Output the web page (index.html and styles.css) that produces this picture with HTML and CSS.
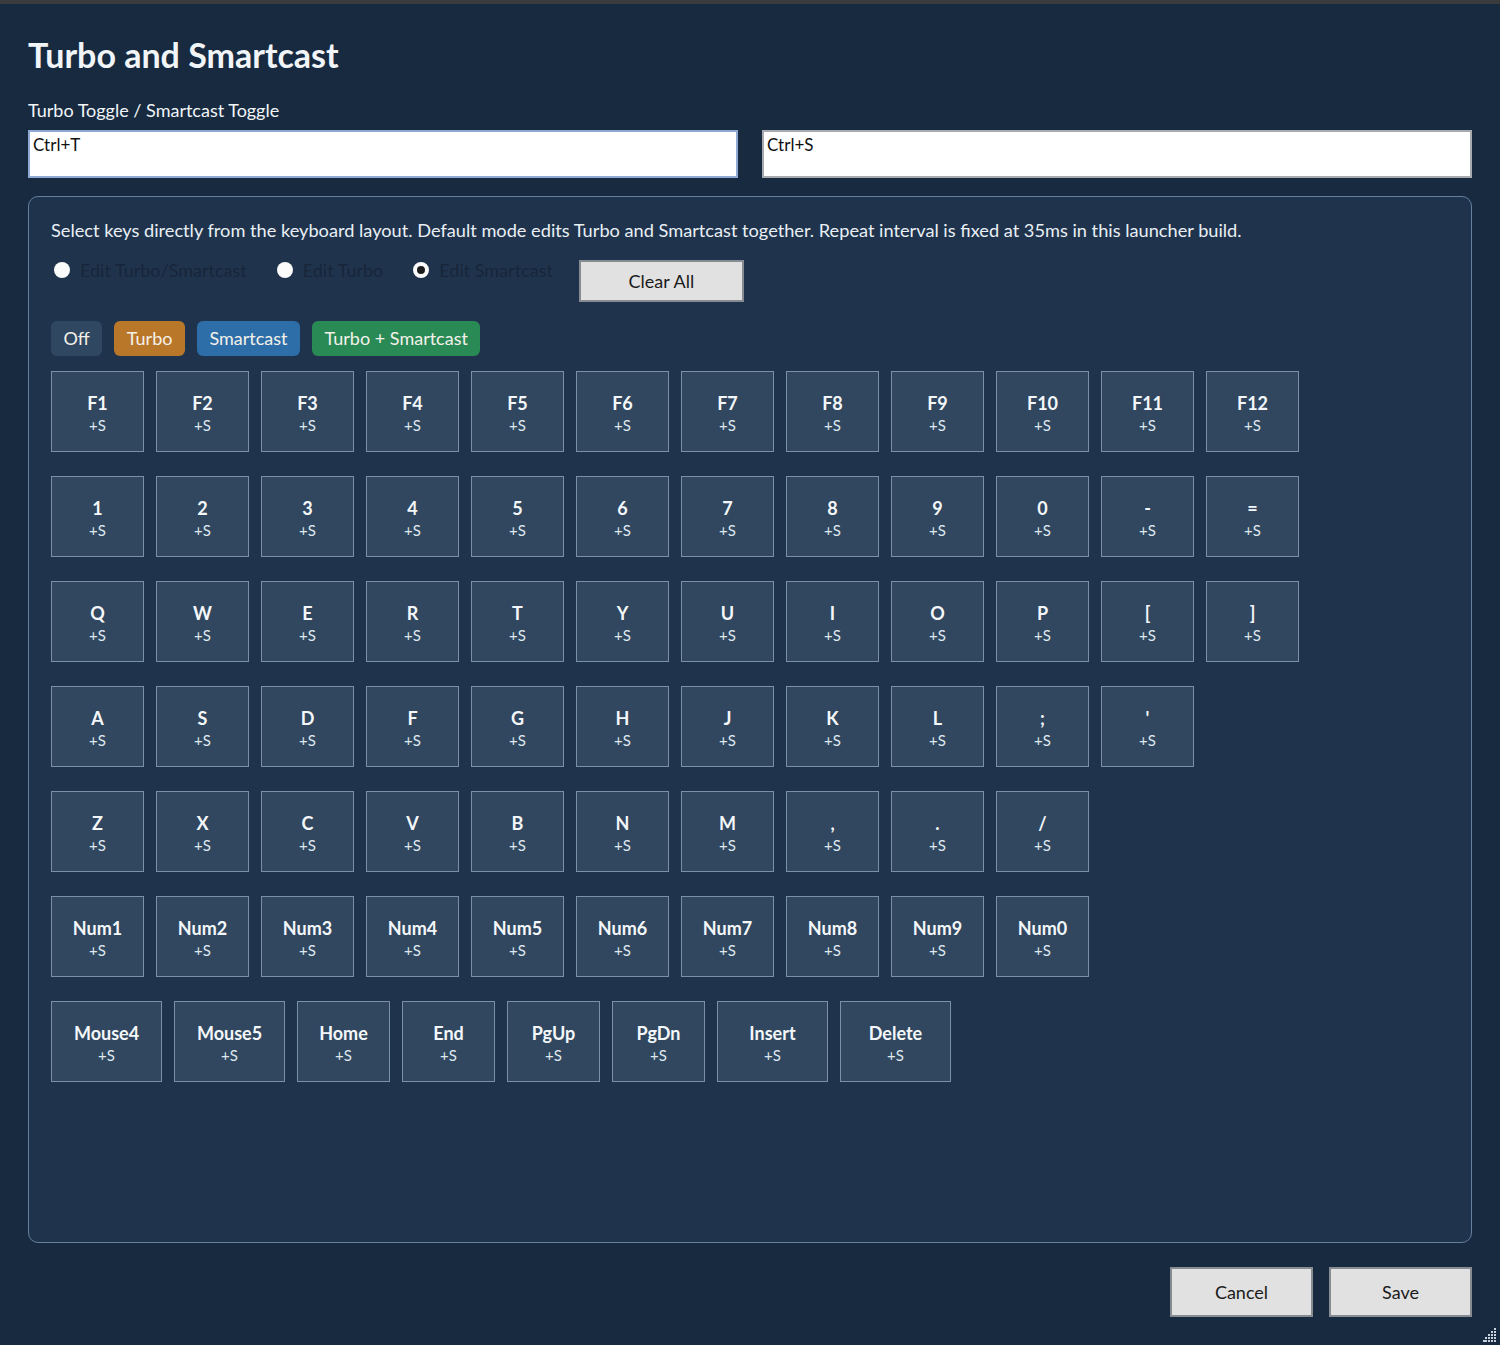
FILE: index.html
```html
<!doctype html>
<html lang="en">
<head>
    <meta charset="utf-8">
    <meta name="viewport" content="width=device-width, initial-scale=1">
    <title>Turbo and Smartcast</title>

    <link rel="stylesheet" href="styles.css">
</head>
<body>
<div class="window">
    <h1 class="title">Turbo and Smartcast</h1>

    <div class="field-label">Turbo Toggle / Smartcast Toggle</div>
    <div class="hotkeys">
        <input class="hotkey focused" type="text" value="Ctrl+T">
        <input class="hotkey" type="text" value="Ctrl+S">
    </div>

    <div class="panel">
        <p class="hint">Select keys directly from the keyboard layout. Default mode edits Turbo and Smartcast together. Repeat interval is fixed at 35ms in this launcher build.</p>

        <div class="modes">
            <label class="mode"><input type="radio" name="mode" value="both"><span>Edit Turbo/Smartcast</span></label>
            <label class="mode"><input type="radio" name="mode" value="turbo"><span>Edit Turbo</span></label>
            <label class="mode"><input type="radio" name="mode" value="smart" checked><span>Edit Smartcast</span></label>
            <button class="btn clear">Clear All</button>
        </div>

        <div class="legend">
            <span class="chip off">Off</span>
            <span class="chip turbo">Turbo</span>
            <span class="chip smart">Smartcast</span>
            <span class="chip both">Turbo + Smartcast</span>
        </div>

        <div id="keyboard" class="keyboard"></div>
    </div>

    <div class="footer">
        <button class="btn big">Cancel</button>
        <button class="btn big">Save</button>
    </div>

    <svg class="grip" width="14" height="14" viewBox="0 0 14 14">
        <g fill="#c9d3de">
            <rect x="11" y="0" width="2" height="2"/>
            <rect x="8" y="3" width="2" height="2"/><rect x="11" y="3" width="2" height="2"/>
            <rect x="5" y="6" width="2" height="2"/><rect x="8" y="6" width="2" height="2"/><rect x="11" y="6" width="2" height="2"/>
            <rect x="2" y="9" width="2" height="2"/><rect x="5" y="9" width="2" height="2"/><rect x="8" y="9" width="2" height="2"/><rect x="11" y="9" width="2" height="2"/>
            <rect x="0" y="12" width="2" height="2"/><rect x="2" y="12" width="2" height="2"/><rect x="5" y="12" width="2" height="2"/><rect x="8" y="12" width="2" height="2"/><rect x="11" y="12" width="2" height="2"/>
        </g>
    </svg>
</div>

<script>
    rows = [
        ['F1', 'F2', 'F3', 'F4', 'F5', 'F6', 'F7', 'F8', 'F9', 'F10', 'F11', 'F12'],
        ['1', '2', '3', '4', '5', '6', '7', '8', '9', '0', '-', '='],
        ['Q', 'W', 'E', 'R', 'T', 'Y', 'U', 'I', 'O', 'P', '[', ']'],
        ['A', 'S', 'D', 'F', 'G', 'H', 'J', 'K', 'L', ';', "'"],
        ['Z', 'X', 'C', 'V', 'B', 'N', 'M', ',', '.', '/'],
        ['Num1', 'Num2', 'Num3', 'Num4', 'Num5', 'Num6', 'Num7', 'Num8', 'Num9', 'Num0'],
        ['Mouse4', 'Mouse5', 'Home', 'End', 'PgUp', 'PgDn', 'Insert', 'Delete']
    ];

    wide = ['Mouse4', 'Mouse5', 'Insert', 'Delete'];

    init = function () {
        let board = document.getElementById('keyboard');
        for (let row of rows) {
            let line = document.createElement('div');
            line.className = 'key-row';
            for (let name of row) {
                let key = document.createElement('button');
                key.className = wide.includes(name) ? 'key wide' : 'key';
                key.innerHTML = '<span class="key-name"></span><span class="key-state">+S</span>';
                key.querySelector('.key-name').textContent = name;
                line.appendChild(key);
            }
            board.appendChild(line);
        }
    }

    init();
</script>
</body>
</html>
```

FILE: styles.css
```css
html, body {
    margin: 0;
    height: 100%;
}

body {
    font-family: "Segoe UI", Lato, "Noto Sans", sans-serif;
    font-size: 18px;
    color: #f2f5f8;
    background: #172a40;
    border-top: 4px solid #3a3b3d;
    box-sizing: border-box;
}

.window {
    height: 100%;
    box-sizing: border-box;
    padding: 30px 28px 28px 28px;
    display: flex;
    flex-direction: column;
}

.title {
    margin: 0 0 22px 0;
    font-size: 34px;
    font-weight: 700;
    line-height: 42px;
}

.field-label {
    line-height: 24px;
    margin-bottom: 8px;
}

.hotkeys {
    display: flex;
    gap: 24px;
}

.hotkey {
    flex: 1;
    height: 48px;
    box-sizing: border-box;
    border: 2px solid #a7abb0;
    background: #fff;
    color: #111;
    font-family: inherit;
    font-size: 17px;
    padding: 0 3px 20px 3px;
    outline: none;
}

.hotkey.focused {
    border-color: #8eaad2;
}

.panel {
    flex: 1;
    margin-top: 18px;
    border: 1px solid #657f9e;
    border-radius: 10px;
    background: #1f344c;
    padding: 20px 22px;
}

.hint {
    margin: 0;
    line-height: 26px;
    font-size: 18.2px;
    color: #e9eff5;
}

.modes {
    display: flex;
    align-items: flex-start;
    margin-top: 17px;
}

.mode {
    display: flex;
    align-items: center;
    height: 22px;
    margin-top: -1px;
    margin-right: 27px;
    color: #18253a;
}

.mode:nth-child(3) {
    margin-right: 26px;
}

.mode input {
    appearance: none;
    -webkit-appearance: none;
    width: 16px;
    height: 16px;
    margin: 0 10px 0 3px;
    border-radius: 50%;
    background: #fbfbfb;
    box-sizing: border-box;
}

.mode input:checked {
    border: 4px solid #fbfbfb;
    background: #1c1c1c;
}

.btn {
    font-family: inherit;
    font-size: 18px;
    color: #1a1a1a;
    background: #e1e1e1;
    border: 2px solid #878b92;
    padding: 0;
}

.clear {
    width: 165px;
    height: 42px;
}

.legend {
    display: flex;
    gap: 12px;
    margin-top: 19px;
}

.chip {
    height: 35px;
    line-height: 35px;
    padding: 0 12.5px;
    border-radius: 6px;
    color: #f4f1ea;
}

.chip.off { background: #2f4760; }
.chip.turbo { background: #b9772a; }
.chip.smart { background: #2e6ea8; }
.chip.both { background: #2a8a56; }

.keyboard {
    margin-top: 15px;
}

.key-row {
    display: flex;
    gap: 12px;
    margin-bottom: 24px;
}

.key {
    width: 93px;
    height: 81px;
    box-sizing: border-box;
    background: #30475f;
    border: 1px solid #7a8fa8;
    color: #f4f7fa;
    font-family: inherit;
    display: flex;
    flex-direction: column;
    align-items: center;
    justify-content: center;
    padding: 4px 0 0 0;
}

.key.wide {
    width: 111px;
}

.key-name {
    font-size: 18px;
    font-weight: 700;
    line-height: 23px;
}

.key-state {
    font-size: 15px;
    line-height: 20px;
    color: #dfe7ef;
}

.footer {
    display: flex;
    justify-content: flex-end;
    gap: 16px;
    margin-top: 24px;
}

.btn.big {
    width: 143px;
    height: 50px;
}

.grip {
    position: absolute;
    right: 3px;
    bottom: 3px;
}
```
